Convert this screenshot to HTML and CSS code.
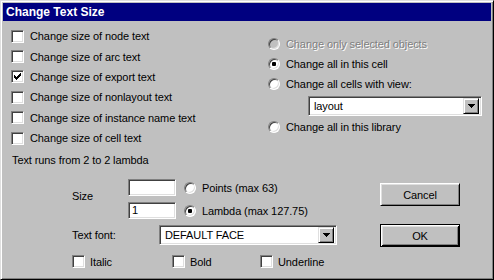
FILE: index.html
```html
<!DOCTYPE html>
<html>
<head>
<meta charset="utf-8">
<link rel="stylesheet" href="styles.css">
</head>
<body>
<div class="window">
  <div class="titlebar">Change Text Size</div>
  <div class="top">
    <div class="col-left">
      <div class="crow"><span class="cb"></span><span class="lbl">Change size of node text</span></div>
      <div class="crow"><span class="cb"></span><span class="lbl">Change size of arc text</span></div>
      <div class="crow"><span class="cb"><svg width="7" height="7" viewBox="0 0 7 7" shape-rendering="crispEdges"><path d="M0 2h1v3H0zM1 3h1v3H1zM2 4h1v3H2zM3 3h1v3H3zM4 2h1v3H4zM5 1h1v3H5zM6 0h1v3H6z" fill="#000"/></svg></span><span class="lbl">Change size of export text</span></div>
      <div class="crow"><span class="cb"></span><span class="lbl">Change size of nonlayout text</span></div>
      <div class="crow"><span class="cb"></span><span class="lbl">Change size of instance name text</span></div>
      <div class="crow"><span class="cb"></span><span class="lbl">Change size of cell text</span></div>
    </div>
    <div class="col-right">
      <div class="rrow disabled"><span class="rb dis"></span><span class="lbl">Change only selected objects</span></div>
      <div class="rrow"><span class="rb on"></span><span class="lbl">Change all in this cell</span></div>
      <div class="rrow"><span class="rb"></span><span class="lbl">Change all cells with view:</span></div>
      <div class="combo combo-view"><span class="combo-text">layout</span><span class="combo-btn"><svg width="7" height="4" viewBox="0 0 7 4" shape-rendering="crispEdges"><path d="M0 0h7v1H0zM1 1h5v1H1zM2 2h3v1H2zM3 3h1v1H3z" fill="#000"/></svg></span></div>
      <div class="rrow"><span class="rb"></span><span class="lbl">Change all in this library</span></div>
    </div>
  </div>
  <div class="runs">Text runs from 2 to 2 lambda</div>
  <div class="bottom">
    <div class="bottom-left">
      <div class="size-block">
        <div class="size-label">Size</div>
        <div class="size-rows">
          <div class="size-row"><span class="edit"></span><span class="rb"></span><span class="lbl">Points (max 63)</span></div>
          <div class="size-row"><span class="edit">1</span><span class="rb on"></span><span class="lbl">Lambda (max 127.75)</span></div>
        </div>
      </div>
      <div class="font-row">
        <span class="font-label">Text font:</span>
        <div class="combo combo-font"><span class="combo-text">DEFAULT FACE</span><span class="combo-btn"><svg width="7" height="4" viewBox="0 0 7 4" shape-rendering="crispEdges"><path d="M0 0h7v1H0zM1 1h5v1H1zM2 2h3v1H2zM3 3h1v1H3z" fill="#000"/></svg></span></div>
      </div>
      <div class="style-row">
        <div class="style-item w-italic"><span class="cb"></span><span class="lbl">Italic</span></div>
        <div class="style-item w-bold"><span class="cb"></span><span class="lbl">Bold</span></div>
        <div class="style-item"><span class="cb"></span><span class="lbl">Underline</span></div>
      </div>
    </div>
    <div class="buttons">
      <div class="btn">Cancel</div>
      <div class="btn default">OK</div>
    </div>
  </div>
</div>
</body>
</html>
```

FILE: styles.css
```css
html, body {
  margin: 0;
  padding: 0;
  background: #c0c0c0;
}
body {
  font-family: "Liberation Sans", Arial, sans-serif;
  font-size: 11px;
  letter-spacing: -0.1px;
  color: #000;
}
.window {
  width: 494px;
  height: 280px;
  box-sizing: border-box;
  background: #c0c0c0;
  border: 1px solid;
  border-color: #dfdfdf #000 #000 #dfdfdf;
  box-shadow: inset 1px 1px #fff, inset -1px -1px #808080;
  padding: 2px;
}
.titlebar {
  height: 18px;
  line-height: 18px;
  background: #000080;
  color: #fff;
  font-weight: bold;
  font-size: 12px;
  letter-spacing: 0;
  padding-left: 3px;
}
.top {
  display: flex;
  height: 132px;
}
.col-left {
  width: 257px;
  margin-left: 8px;
  padding-top: 5px;
  display: flex;
  flex-direction: column;
}
.crow {
  height: 20.4px;
  display: flex;
  align-items: center;
}
.crow .lbl {
  margin-left: 6px;
}
.cb {
  width: 13px;
  height: 13px;
  box-sizing: border-box;
  flex: none;
  background: #fff;
  border: 1px solid;
  border-color: #808080 #fff #fff #808080;
  box-shadow: inset 1px 1px #404040, inset -1px -1px #dfdfdf;
  display: flex;
  align-items: center;
  justify-content: center;
}
.col-right {
  padding-top: 13px;
  display: flex;
  flex-direction: column;
}
.rrow {
  height: 20px;
  display: flex;
  align-items: center;
}
.rrow .lbl {
  margin-left: 6px;
}
.disabled .lbl {
  color: #808080;
  text-shadow: 1px 1px #fff;
}
.rb {
  width: 12px;
  height: 12px;
  box-sizing: border-box;
  flex: none;
  border-radius: 50%;
  background: #fff;
  border: 1px solid;
  border-color: #808080 #fff #fff #808080;
  box-shadow: inset 1px 1px #404040, inset -1px -1px #dfdfdf;
  display: flex;
  align-items: center;
  justify-content: center;
}
.rb.dis {
  background: #c0c0c0;
}
.rb.on::after {
  content: "";
  width: 4px;
  height: 4px;
  border-radius: 1px;
  background: #000;
}
.combo {
  height: 20px;
  box-sizing: border-box;
  background: #fff;
  border: 1px solid;
  border-color: #808080 #fff #fff #808080;
  box-shadow: inset 1px 1px #404040, inset -1px -1px #dfdfdf;
  padding: 2px;
  display: flex;
  align-items: center;
}
.combo-text {
  flex: 1;
  padding-left: 3px;
  line-height: 16px;
}
.combo-btn {
  width: 16px;
  height: 16px;
  box-sizing: border-box;
  background: #c0c0c0;
  border: 1px solid;
  border-color: #dfdfdf #000 #000 #dfdfdf;
  box-shadow: inset 1px 1px #fff, inset -1px -1px #808080;
  display: flex;
  align-items: center;
  justify-content: center;
}
.combo-view {
  width: 174px;
  margin-left: 40px;
  margin-top: 2px;
  margin-bottom: 1px;
}
.runs {
  margin-left: 9px;
  height: 14px;
  line-height: 14px;
}
.bottom {
  display: flex;
}
.bottom-left {
  width: 308px;
  margin-left: 69px;
  padding-top: 12px;
}
.size-block {
  display: flex;
}
.size-label {
  width: 56px;
  align-self: center;
  padding-bottom: 6px;
}
.size-rows {
  display: flex;
  flex-direction: column;
  gap: 6px;
}
.size-row {
  height: 17px;
  display: flex;
  align-items: center;
}
.size-row .rb {
  margin-left: 8px;
}
.size-row .lbl {
  margin-left: 6px;
}
.edit {
  width: 48px;
  height: 17px;
  box-sizing: border-box;
  background: #fff;
  border: 1px solid;
  border-color: #808080 #fff #fff #808080;
  box-shadow: inset 1px 1px #404040, inset -1px -1px #dfdfdf;
  padding-left: 3px;
  line-height: 15px;
}
.font-row {
  display: flex;
  align-items: center;
  margin-top: 6px;
}
.font-label {
  width: 87px;
}
.combo-font {
  width: 178px;
}
.style-row {
  display: flex;
  margin-top: 10px;
}
.style-item {
  display: flex;
  align-items: center;
  height: 13px;
}
.style-item .lbl {
  margin-left: 5px;
}
.w-italic {
  width: 100px;
}
.w-bold {
  width: 88px;
}
.buttons {
  padding-top: 16px;
  display: flex;
  flex-direction: column;
  gap: 18px;
}
.btn {
  width: 80px;
  height: 23px;
  box-sizing: border-box;
  background: #c0c0c0;
  border: 1px solid;
  border-color: #fff #000 #000 #fff;
  box-shadow: inset 1px 1px #dfdfdf, inset -1px -1px #808080;
  display: flex;
  align-items: center;
  justify-content: center;
}
.btn.default {
  border-color: #000;
  box-shadow: inset 1px 1px #fff, inset -1px -1px #000, inset 2px 2px #dfdfdf, inset -2px -2px #808080;
}
```
